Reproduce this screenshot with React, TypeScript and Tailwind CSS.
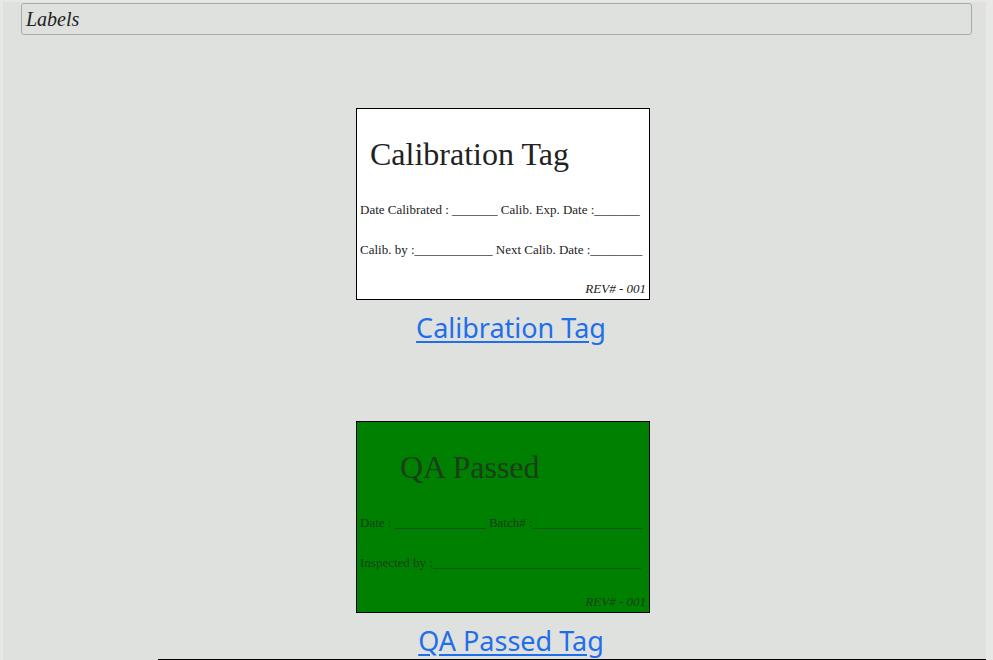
const serif = "font-['Liberation_Serif','Times_New_Roman',serif]";

function Tag({
  title,
  titleIndent,
  rows,
  green,
}: {
  title: string;
  titleIndent: string;
  rows: string[];
  green?: boolean;
}) {
  return (
    <div
      className={`flex h-[192px] w-[294px] flex-col overflow-hidden border border-black ${serif} ${
        green ? 'bg-[#008000] text-[#1a3f1a]' : 'bg-white text-[#222]'
      }`}
    >
      <h1 className={`mt-[25px] ${titleIndent} text-[32px] leading-[40px]`}>{title}</h1>
      <p className="ml-[3px] mt-[28px] whitespace-pre text-[13px] leading-[16px]">{rows[0]}</p>
      <p className="ml-[3px] mt-[24px] whitespace-pre text-[13px] leading-[16px]">{rows[1]}</p>
      <p className="mr-[3px] mt-[23px] text-right text-[13px] italic leading-[16px]">REV# - 001</p>
    </div>
  );
}

function LabelBlock({ children, link }: { children: React.ReactNode; link: string }) {
  return (
    <div className="flex flex-col items-center">
      {children}
      <a
        href="#"
        className="ml-[16px] mt-[10px] font-['Noto_Sans','Open_Sans',sans-serif] text-[27px] leading-[36px] text-[#1f6feb] underline underline-offset-[3px]"
      >
        {link}
      </a>
    </div>
  );
}

export default function App() {
  return (
    <div className="h-[660px] overflow-hidden bg-[#e8e9e7] pt-[2px]">
      <div className="ml-[3px] mr-[7px] flex h-full flex-col bg-[#dfe1de]">
        <div
          className={`ml-[18px] mr-[14px] mt-[1px] h-[32px] rounded-[3px] border border-[#a9aba9] px-[4px] text-[20px] italic leading-[30px] text-[#222] ${serif}`}
        >
          Labels
        </div>

        <div className="mt-[73px] flex flex-col items-center gap-[75px] pl-[17px]">
          <LabelBlock link="Calibration Tag">
            <Tag
              title="Calibration Tag"
              titleIndent="ml-[13px]"
              rows={[
                'Date Calibrated : _______ Calib. Exp. Date :_______',
                'Calib. by :____________ Next Calib. Date :________',
              ]}
            />
          </LabelBlock>
          <LabelBlock link="QA Passed Tag">
            <Tag
              green
              title="QA Passed"
              titleIndent="ml-[43px]"
              rows={[
                'Date : ______________ Batch# :_________________',
                'Inspected by :________________________________',
              ]}
            />
          </LabelBlock>
        </div>
        <div className="ml-[155px] border-t border-black" />
      </div>
    </div>
  );
}
